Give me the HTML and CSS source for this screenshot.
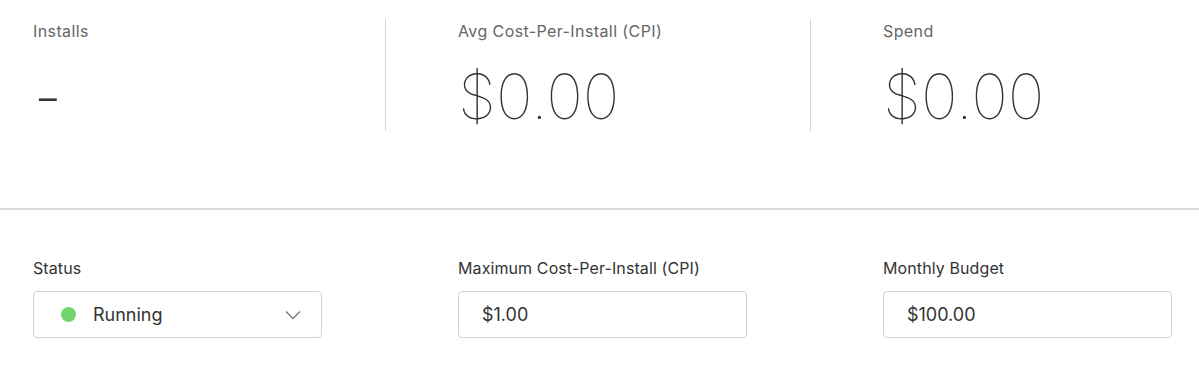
FILE: index.html
```html
<!DOCTYPE html>
<html lang="en">

<head>
    <meta charset="UTF-8">
    <meta name="viewport" content="width=device-width, initial-scale=1.0">
    <title>Campaign</title>

    <link rel="stylesheet" href="styles.css">
</head>

<body>
    <div class="stats">
        <div class="stat">
            <div class="stat-label">Installs</div>
            <div class="stat-value empty">-</div>
        </div>
        <div class="stat">
            <div class="stat-label">Avg Cost-Per-Install (CPI)</div>
            <div class="stat-value">$0.00</div>
        </div>
        <div class="stat last">
            <div class="stat-label">Spend</div>
            <div class="stat-value">$0.00</div>
        </div>
    </div>

    <hr class="divider">

    <div class="fields">
        <div class="field">
            <label class="field-label">Status</label>
            <div class="select">
                <span class="dot"></span>
                <span class="select-text">Running</span>
                <svg class="chevron" width="16" height="10" viewBox="0 0 16 10">
                    <path d="M1 1.5 L8 8.5 L15 1.5" fill="none" stroke="#777" stroke-width="1.3" />
                </svg>
            </div>
        </div>
        <div class="field">
            <label class="field-label">Maximum Cost-Per-Install (CPI)</label>
            <input class="text-input" type="text" value="$1.00">
        </div>
        <div class="field">
            <label class="field-label">Monthly Budget</label>
            <input class="text-input" type="text" value="$100.00">
        </div>
    </div>
</body>

</html>
```

FILE: styles.css
```css
* {
    margin: 0;
    padding: 0;
    box-sizing: border-box;
}

body {
    background: #fff;
    font-family: "Inter", "Roboto", sans-serif;
    color: #333;
    overflow: hidden;
}

.stats {
    display: grid;
    grid-template-columns: 353px 353px 1fr;
    column-gap: 72px;
    padding: 19px 0 0 33px;
    height: 208px;
}

.stat {
    height: 112px;
    border-right: 1px solid #d4d4d4;
}

.stat.last {
    border-right: none;
}

.stat-label {
    margin-top: 2px;
    font-size: 16px;
    color: #666;
    letter-spacing: 0.4px;
}

.stat-value {
    margin-top: 21px;
    font-size: 62px;
    font-weight: 100;
    line-height: 70px;
    color: #333;
}

.stat-value.empty {
    font-weight: 200;
    padding-left: 1px;
}

.divider {
    border: none;
    border-top: 2px solid #d9d9d9;
}

.fields {
    display: grid;
    grid-template-columns: 425px 425px 1fr;
    padding: 48px 0 0 33px;
}

.field-label {
    display: block;
    font-size: 16px;
    letter-spacing: 0.1px;
    color: #333;
    height: 33px;
}

.select,
.text-input {
    display: flex;
    align-items: center;
    width: 289px;
    height: 47px;
    border: 1px solid #d2d2d2;
    border-radius: 4px;
    background: #fff;
    font-family: "Inter", "Roboto", sans-serif;
    font-size: 18px;
    color: #333;
}

.text-input {
    padding-left: 23px;
    outline: none;
}

.select {
    padding: 0 20px 0 27px;
}

.dot {
    width: 15px;
    height: 15px;
    border-radius: 50%;
    background: #6fd56c;
}

.select-text {
    margin-left: 17px;
    flex: 1;
}
```
